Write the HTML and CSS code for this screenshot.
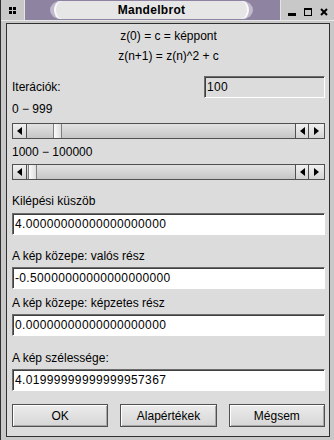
FILE: index.html
```html
<!DOCTYPE html>
<html lang="hu">
<head>
    <meta charset="UTF-8">
    <meta name="viewport" content="width=device-width, initial-scale=1.0">
    <title>Mandelbrot</title>
    <link rel="stylesheet" href="styles.css">
</head>
<body>
    <div id="window">
        <div id="titlebar">
            <div class="tb-menu">
                <span class="dots"><i></i><i></i><i></i><i></i></span>
            </div>
            <div class="tb-band">
                <div class="tb-pill">Mandelbrot</div>
            </div>
            <div class="tb-buttons">
                <span class="tb-min"></span>
                <span class="tb-max"></span>
                <svg class="tb-close" width="8" height="8" viewBox="0 0 8 8">
                    <path d="M1 1 L7 7 M7 1 L1 7" stroke="#000" stroke-width="2"/>
                </svg>
            </div>
        </div>

        <div id="client">
            <div class="formula">
                <div>z(0) = c = képpont</div>
                <div>z(n+1) = z(n)^2 + c</div>
            </div>

            <div class="iter-row">
                <span class="label">Iterációk:</span>
                <input class="field field-gray" id="iter" type="text" value="100">
            </div>

            <div class="label range-a">0 − 999</div>
            <div class="scrollbar sb-a">
                <span class="arrow"><svg width="5" height="8" viewBox="0 0 5 8"><polygon points="5,0 5,8 0,4" fill="#000"/></svg></span>
                <div class="trough"><span class="thumb" style="margin-left:26px"></span></div>
                <span class="arrow"><svg width="5" height="8" viewBox="0 0 5 8"><polygon points="5,0 5,8 0,4" fill="#000"/></svg></span>
                <span class="arrow"><svg width="5" height="8" viewBox="0 0 5 8"><polygon points="0,0 0,8 5,4" fill="#000"/></svg></span>
            </div>

            <div class="label range-b">1000 − 100000</div>
            <div class="scrollbar sb-b">
                <span class="arrow"><svg width="5" height="8" viewBox="0 0 5 8"><polygon points="5,0 5,8 0,4" fill="#000"/></svg></span>
                <div class="trough"><span class="thumb" style="margin-left:1px"></span></div>
                <span class="arrow"><svg width="5" height="8" viewBox="0 0 5 8"><polygon points="5,0 5,8 0,4" fill="#000"/></svg></span>
                <span class="arrow"><svg width="5" height="8" viewBox="0 0 5 8"><polygon points="0,0 0,8 5,4" fill="#000"/></svg></span>
            </div>

            <div class="label lbl-escape">Kilépési küszöb</div>
            <input class="field f-escape" type="text" value="4.00000000000000000000">

            <div class="label lbl-re">A kép közepe: valós rész</div>
            <input class="field f-re" type="text" value="-0.50000000000000000000">

            <div class="label lbl-im">A kép közepe: képzetes rész</div>
            <input class="field f-im" type="text" value="0.00000000000000000000">

            <div class="label lbl-width">A kép szélessége:</div>
            <input class="field f-width" type="text" value="4.01999999999999957367">

            <div class="buttons">
                <button class="btn">OK</button>
                <button class="btn">Alapértékek</button>
                <button class="btn">Mégsem</button>
            </div>
        </div>
    </div>
</body>
</html>
```

FILE: styles.css
```css
body{
    margin: 0;
    background-color: #c8c8c8;
    font-family: "Liberation Sans", Arial, sans-serif;
    font-size: 12px;
    color: #000;
}
#window{
    width: 334px;
    height: 440px;
    box-sizing: border-box;
    border-left: 1px solid #303030;
    display: flex;
    flex-direction: column;
    background-color: #c8c8c8;
}

/* title bar */
#titlebar{
    height: 20px;
    display: flex;
    border-bottom: 1px solid #e8e8e8;
}
.tb-menu{
    width: 23px;
    background-color: #c8c8c8;
    border-right: 1px solid #e4e4e4;
    display: flex;
    justify-content: center;
    align-items: center;
}
.dots{
    display: grid;
    grid-template-columns: 3px 3px;
    gap: 1px;
}
.dots i{
    width: 3px;
    height: 3px;
    background-color: #000;
}
.tb-band{
    width: 255px;
    background-color: #8e83a0;
    display: flex;
    align-items: center;
    padding-left: 25px;
    box-sizing: border-box;
}
.tb-pill{
    width: 203px;
    height: 18px;
    box-sizing: border-box;
    background-color: #e6e6e6;
    border-left: 4px solid #c2b9ce;
    border-right: 4px solid #c2b9ce;
    border-radius: 10px / 50%;
    box-shadow: inset 2px 0 0 #fafafa, inset -2px 0 0 #fafafa;
    text-align: center;
    line-height: 18px;
    font-weight: bold;
    font-size: 12px;
    letter-spacing: 0.3px;
}
.tb-buttons{
    flex: 1;
    background-color: #c8c8c8;
    border-left: 1px solid #e4e4e4;
    display: flex;
    align-items: center;
    padding-left: 7px;
    padding-top: 3px;
    gap: 8px;
}
.tb-min{
    width: 8px;
    height: 3px;
    background-color: #000;
    margin-top: 5px;
}
.tb-max{
    width: 8px;
    height: 8px;
    box-sizing: border-box;
    border: 1px solid #000;
    border-top-width: 2px;
}

/* client area */
#client{
    flex: 1;
    margin: 2px 4px 3px 5px;
    border: 1px solid #303030;
    background-color: #dcdcdc;
    padding: 2px 4px 0 5px;
    display: flex;
    flex-direction: column;
}
.formula{
    text-align: center;
    line-height: 20px;
}
.label{
    line-height: 14px;
    white-space: nowrap;
}
.iter-row{
    margin-top: 10px;
    display: flex;
    justify-content: space-between;
    align-items: center;
}
.field{
    height: 22px;
    box-sizing: border-box;
    margin: 0;
    padding: 0 2px;
    border: 1px solid #fff;
    border-top-color: #6c6c6c;
    border-left-color: #6c6c6c;
    box-shadow: inset 1px 1px 0 #404040;
    background-color: #fff;
    font-family: "Liberation Sans", Arial, sans-serif;
    font-size: 12px;
    letter-spacing: 0.35px;
    color: #000;
    outline: none;
}
.field-gray{
    width: 121px;
    background-color: #dcdcdc;
}
.range-a{ margin-top: 4px; }
.sb-a{ margin-top: 7px; }
.range-b{ margin-top: 6px; }
.sb-b{ margin-top: 5px; }
.lbl-escape{ margin-top: 14px; }
.f-escape{ margin-top: 5px; }
.lbl-re{ margin-top: 14px; }
.f-re{ margin-top: 4px; }
.lbl-im{ margin-top: 7px; }
.f-im{ margin-top: 4px; }
.lbl-width{ margin-top: 15px; }
.f-width{ margin-top: 4px; }

/* scrollbars */
.scrollbar{
    height: 16px;
    box-sizing: border-box;
    border: 1px solid #505050;
    display: flex;
    background-color: #cfcfcf;
}
.arrow{
    width: 14px;
    box-sizing: border-box;
    background: linear-gradient(#f0f0f0, #d4d4d4);
    border-right: 1px solid #505050;
    display: flex;
    justify-content: center;
    align-items: center;
}
.scrollbar .arrow:nth-child(3){
    border-left: 1px solid #505050;
}
.scrollbar .arrow:last-child{
    border-right: 0;
    width: 15px;
}
.trough{
    flex: 1;
    background: linear-gradient(#e2e2e2, #c6c6c6);
    display: flex;
}
.thumb{
    width: 9px;
    box-sizing: border-box;
    background: linear-gradient(90deg, #fafafa, #dedede);
    border-left: 1px solid #808080;
    border-right: 1px solid #808080;
}

/* buttons */
.buttons{
    margin-top: 13px;
    display: flex;
    gap: 12px;
}
.btn{
    flex: 1;
    height: 23px;
    padding: 0;
    border: 1px solid #505050;
    box-shadow: inset 1px 1px 0 #fff, inset -1px -1px 0 #a8a8a8;
    background: linear-gradient(#ececec, #d6d6d6);
    font-family: "Liberation Sans", Arial, sans-serif;
    font-size: 12px;
    color: #000;
    cursor: pointer;
}
```
